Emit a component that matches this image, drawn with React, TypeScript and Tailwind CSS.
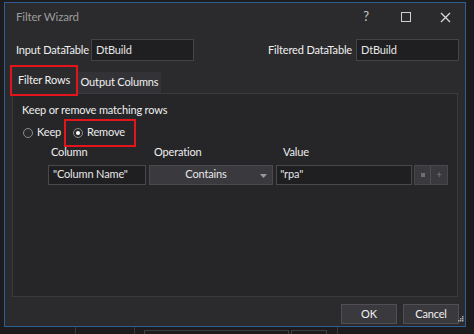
import React from "react";

const font = { fontFamily: 'Lato, "Open Sans", sans-serif' };

export default function App() {
  return (
    <div className="w-[474px] h-[334px] bg-[#1c1c1e] relative overflow-hidden text-[11px] tracking-[-0.15px] whitespace-nowrap" style={font}>
      {/* underlying UI hints below dialog */}
      <div className="absolute left-[75px] top-[327px] w-px h-[7px] bg-[#3a3a3a]" />
      <div className="absolute left-[134px] top-[327px] w-px h-[7px] bg-[#3a3a3a]" />
      <div className="absolute left-[144px] top-[330px] w-[145px] h-[4px] border border-[#3e3e3e] border-b-0" />
      <div className="absolute left-[291px] top-[330px] w-[36px] h-[4px] border border-[#3e3e3e] border-b-0" />
      <div className="absolute left-[337px] top-[327px] w-px h-[7px] bg-[#3a3a3a]" />

      <div className="absolute left-[4px] top-[2px] w-[462px] h-[325px] border border-[#2d5d92] bg-[#2b2b2d] flex flex-col">
        {/* title bar */}
        <div className="h-[28px] flex items-center pl-[11px] pr-[12px] shrink-0">
          <span className="text-[11.5px] text-[#9b9b9b]">Filter Wizard</span>
          <div className="ml-auto flex items-center">
            <span className="text-[13px] text-[#c8c8c8] w-[20px] text-center mr-[25px]">?</span>
            <span className="w-[10px] h-[10px] border border-[#d0d0d0] mr-[29px]" />
            <svg width="11" height="11" viewBox="0 0 11 11" className="mr-[2px]">
              <path d="M1 1 L10 10 M10 1 L1 10" stroke="#d8d8d8" strokeWidth="1.3" />
            </svg>
          </div>
        </div>

        {/* datatables row */}
        <div className="flex items-center h-[24px] mt-[7px] pl-[11px] pr-[6px]">
          <span className="text-[#f0f0f0] w-[75px]">Input DataTable</span>
          <div className="w-[103px] h-[22px] bg-[#1f1f21] border border-[#444447] flex items-center pl-[4px]">
            <span className="text-[#e6e6e6]">DtBuild</span>
          </div>
          <div className="ml-auto flex items-center">
            <span className="text-[#f0f0f0] mr-[4px]">Filtered DataTable</span>
            <div className="w-[103px] h-[22px] bg-[#1f1f21] border border-[#444447] flex items-center pl-[4px]">
              <span className="text-[#e6e6e6]">DtBuild</span>
            </div>
          </div>
        </div>

        {/* tabs */}
        <div className="flex items-end h-[29px] mt-[2px] pl-[5px] relative">
          <div className="h-[31px] w-[68px] justify-center flex items-center bg-[#2b2b2d] text-[#f0f0f0] relative z-10 border-2 border-[#e3141b] -mb-[3px]">
            Filter Rows
          </div>
          <div className="h-[21px] w-[83px] justify-center flex items-center bg-[#333337] text-[#f0f0f0]">
            Output Columns
          </div>
        </div>

        {/* panel */}
        <div className="mx-[7px] h-[204px] border border-[#3b3b3d] bg-[#262628] px-[9px] pt-[8px] relative">
          <div className="text-[#eeeeee]">Keep or remove matching rows</div>
          <div className="flex items-center mt-[4px] h-[20px]">
            <span className="w-[10px] h-[10px] rounded-full border border-[#8a8a8a] bg-[#2a2a2a] ml-[1px] mr-[4px]" />
            <span className="text-[#eeeeee]">Keep</span>
            <div className="ml-[3px] h-[28px] w-[72px] border-2 border-[#e3141b] flex items-center pl-[7px]">
              <span className="w-[10px] h-[10px] rounded-full border border-[#8a8a8a] bg-[#2a2a2a] flex items-center justify-center mr-[4px]">
                <span className="w-[4px] h-[4px] rounded-full bg-white" />
              </span>
              <span className="text-[#eeeeee]">Remove</span>
            </div>
          </div>
          <div className="flex mt-[3px] h-[14px] items-center text-[#eeeeee]">
            <span className="ml-[29px] w-[103px]">Column</span>
            <span className="w-[129px]">Operation</span>
            <span>Value</span>
          </div>
          <div className="flex items-center mt-[5px] h-[20px] ml-[26px]">
            <div className="w-[99px] h-[20px] bg-[#1f1f21] border border-[#49494c] flex items-center pl-[4px] text-[#e6e6e6]">
              "Column Name"
            </div>
            <div className="ml-[3px] w-[126px] h-[20px] bg-[#3a3a3e] border border-[#4a4a4e] flex items-center relative text-[#e6e6e6]">
              <span className="w-full text-center pr-[10px]">Contains</span>
              <svg width="7" height="4" viewBox="0 0 7 4" className="absolute right-[5px] top-[8px]">
                <path d="M0 0 L7 0 L3.5 4 Z" fill="#9a9a9a" />
              </svg>
            </div>
            <div className="ml-[3px] w-[138px] h-[20px] bg-[#1f1f21] border border-[#49494c] flex items-center pl-[3px] text-[#e6e6e6]">
              "rpa"
            </div>
            <div className="ml-[2px] w-[34px] h-[20px] bg-[#3a3a3e] border border-[#48484c] flex">
              <div className="w-1/2 flex items-center justify-center border-r border-[#4e4e52]">
                <span className="w-[4px] h-[4px] bg-[#6e6e72]" />
              </div>
              <div className="w-1/2 flex items-center justify-center text-[10px] text-[#7a7a7e]">+</div>
            </div>
          </div>
        </div>

        {/* buttons */}
        <div className="flex justify-end items-center mt-[7px] pr-[6px] relative">
          <div className="w-[56px] h-[20px] bg-[#3a3a3e] border border-[#505054] flex items-center justify-center text-[#f0f0f0]">OK</div>
          <div className="ml-[6px] w-[56px] h-[20px] bg-[#3a3a3e] border border-[#505054] flex items-center justify-center text-[#f0f0f0]">Cancel</div>
          <svg width="6" height="6" viewBox="0 0 6 6" className="absolute right-[1px] top-[12px]">
            <rect x="4" y="0" width="1.5" height="1.5" fill="#aaa" />
            <rect x="2" y="2" width="1.5" height="1.5" fill="#aaa" />
            <rect x="4" y="2" width="1.5" height="1.5" fill="#aaa" />
            <rect x="0" y="4" width="1.5" height="1.5" fill="#aaa" />
            <rect x="2" y="4" width="1.5" height="1.5" fill="#aaa" />
            <rect x="4" y="4" width="1.5" height="1.5" fill="#aaa" />
          </svg>
        </div>
      </div>
    </div>
  );
}
